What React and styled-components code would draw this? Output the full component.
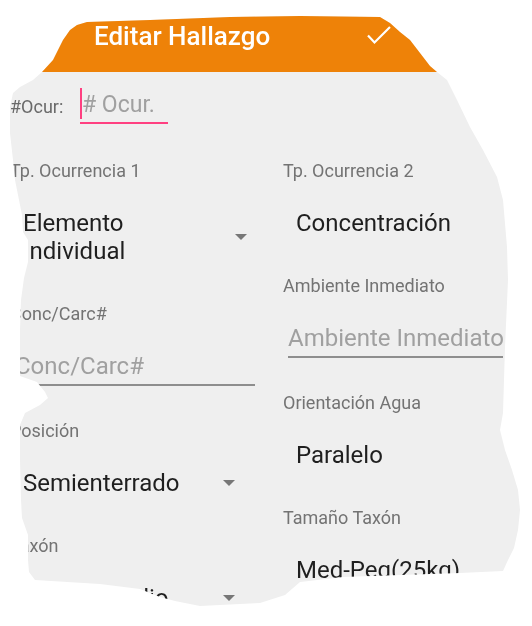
import React from 'react'
import styled, { createGlobalStyle } from 'styled-components'

const GlobalStyle = createGlobalStyle`
    html, body {
        margin: 0;
        padding: 0;
        background: #ffffff;
    }
    body {
        font-family: Roboto, 'Noto Sans', sans-serif;
    }
`

// torn-paper outline of the screenshot
const tornEdge = [
    [70, 30], [77, 25], [87, 22], [150, 20], [230, 17], [300, 16], [380, 17],
    [390, 23], [400, 32], [410, 40], [420, 53], [430, 66], [437, 72], [447, 80],
    [457, 100], [470, 127], [483, 150], [497, 177], [503, 200], [507, 247],
    [508, 280], [505, 347], [503, 413], [500, 430], [505, 450], [512, 470],
    [518, 490], [520, 510], [518, 530], [514, 548], [508, 560], [503, 571],
    [460, 573], [400, 575], [343, 577], [300, 582], [285, 595], [260, 603],
    [200, 606], [175, 601], [160, 597], [140, 589], [100, 584], [35, 580],
    [29, 572], [28, 560], [28, 535], [22, 518], [21, 500], [20, 460], [20, 425],
    [25, 413], [40, 405], [48, 398], [45, 392], [37, 382], [20, 376], [20, 330],
    [21, 300], [24, 278], [28, 262], [28, 240], [23, 232], [22, 215], [19, 200],
    [15, 180], [13, 160], [10, 133], [10, 107], [13, 93], [20, 87], [33, 80],
    [42, 72], [53, 60], [63, 40],
]
    .map(([x, y]) => `${x}px ${y}px`)
    .join(', ')

const Page = styled.div`
    width: 532px;
    height: 626px;
    overflow: hidden;
    background: #ffffff;
    filter: drop-shadow(0 0 1.5px rgba(0, 0, 0, 0.18));
`

const Screen = styled.div`
    width: 532px;
    height: 626px;
    background: #efefef;
    clip-path: polygon(${tornEdge});
    display: flex;
    flex-direction: column;
`

const AppBar = styled.header`
    height: 72px;
    flex: none;
    box-sizing: border-box;
    background: #ee8208;
    display: flex;
    align-items: center;
    padding: 0 140px 0 94px;
`

const Title = styled.h1`
    flex: 1;
    margin: 0;
    color: #ffffff;
    font-size: 26px;
    font-weight: 500;
    line-height: 30px;
`

const Form = styled.div`
    padding-left: 10px;
`

const OcurRow = styled.div`
    display: flex;
    align-items: flex-start;
    margin-top: 16px;
`

const InlineLabel = styled.span`
    width: 70px;
    margin-top: 8px;
    font-size: 18px;
    line-height: 22px;
    color: #6a6a6a;
`

const InputBox = styled.div`
    width: ${p => p.$w}px;
    border-bottom: 2px solid ${p => p.$line};
`

const InputLine = styled.div`
    display: flex;
    align-items: flex-start;
    height: 34px;
`

const Caret = styled.span`
    width: 2px;
    height: 31px;
    background: #ff4081;
`

const Hint = styled.span`
    font-size: ${p => p.$size}px;
    line-height: 34px;
    color: #a0a0a0;
    white-space: nowrap;
`

const Columns = styled.div`
    display: grid;
    grid-template-columns: 248px 220px;
    column-gap: 25px;
    margin-top: 36px;
`

const Column = styled.div`
    display: flex;
    flex-direction: column;
    align-items: flex-start;
`

const Label = styled.div`
    font-size: 18px;
    line-height: 22px;
    color: #737373;
    white-space: nowrap;
`

const Spinner = styled.div`
    flex: none;
    width: ${p => p.$w}px;
    box-sizing: border-box;
    display: flex;
    align-items: center;
    padding-left: 13px;
    margin: 27px 0 38px;
`

const SpinnerText = styled.div`
    max-width: 180px;
    font-size: 24px;
    line-height: 28px;
    color: #1f1f1f;
    white-space: ${p => (p.$wrap ? 'normal' : 'nowrap')};
`

const Arrow = styled.span`
    margin-left: auto;
    width: 0;
    height: 0;
    border-left: 6px solid transparent;
    border-right: 6px solid transparent;
    border-top: 6px solid #777777;
`

const EditText = styled.div`
    align-self: stretch;
    margin: 27px ${p => p.$right}px 34px 5px;
    padding-bottom: 4px;
    border-bottom: 2px solid #8e8e8e;
    font-size: 24px;
    line-height: 28px;
    color: #a0a0a0;
    white-space: nowrap;
`

const Check = () => (
    <svg width="28" height="28" viewBox="0 0 28 28">
        <polyline
            points="4,13.5 10.5,20.5 26,5"
            fill="none"
            stroke="#ffffff"
            strokeWidth="2.2"
        />
    </svg>
)

const left = [
    { label: 'Tp. Ocurrencia 1', value: 'Elemento Individual', w: 237, wrap: true },
    { label: 'Conc/Carc#', hint: 'Conc/Carc#', right: 3 },
    { label: 'Posición', value: 'Semienterrado', w: 225 },
    { label: 'Taxón', value: 'Bovino Medio', w: 225 },
]

const right = [
    { label: 'Tp. Ocurrencia 2', value: 'Concentración', w: 238 },
    { label: 'Ambiente Inmediato', hint: 'Ambiente Inmediato', right: 0 },
    { label: 'Orientación Agua', value: 'Paralelo', w: 238 },
    { label: 'Tamaño Taxón', value: 'Med-Peg(25kg)', w: 238 },
]

const Field = ({ item }) => (
    <>
        <Label>{item.label}</Label>
        {item.hint ? (
            <EditText $right={item.right}>{item.hint}</EditText>
        ) : (
            <Spinner $w={item.w}>
                <SpinnerText $wrap={item.wrap}>{item.value}</SpinnerText>
                <Arrow />
            </Spinner>
        )}
    </>
)

export default function App() {
    return (
        <Page>
            <GlobalStyle />
            <Screen>
                <AppBar>
                    <Title>Editar Hallazgo</Title>
                    <Check />
                </AppBar>
                <Form>
                    <OcurRow>
                        <InlineLabel>#Ocur:</InlineLabel>
                        <InputBox $w={88} $line="#ff4081">
                            <InputLine>
                                <Caret />
                                <Hint $size={23}># Ocur.</Hint>
                            </InputLine>
                        </InputBox>
                    </OcurRow>
                    <Columns>
                        <Column>
                            {left.map(item => (
                                <Field key={item.label} item={item} />
                            ))}
                        </Column>
                        <Column>
                            {right.map(item => (
                                <Field key={item.label} item={item} />
                            ))}
                        </Column>
                    </Columns>
                </Form>
            </Screen>
        </Page>
    )
}
